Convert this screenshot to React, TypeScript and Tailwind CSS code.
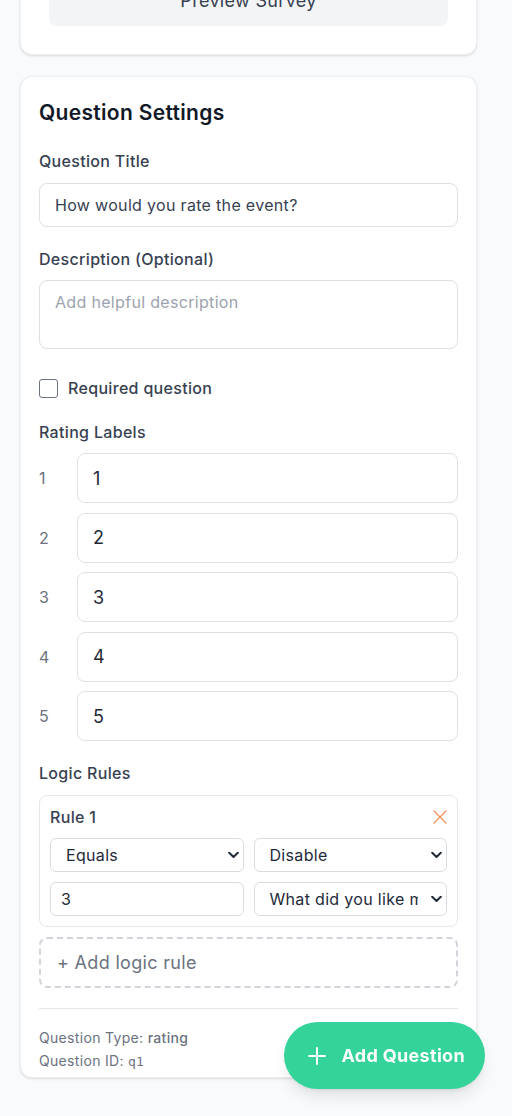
import { useState } from "react";

const labels = ["1", "2", "3", "4", "5"];

const Chevron = () => (
  <svg
    className="pointer-events-none absolute right-[5px] top-1/2 -translate-y-1/2"
    width="11"
    height="7"
    viewBox="0 0 11 7"
    fill="none"
  >
    <path d="M1.2 1.2 5.5 5.5 9.8 1.2" stroke="#1f2937" strokeWidth="2" strokeLinecap="round" strokeLinejoin="round" />
  </svg>
);

const RuleSelect = ({ value, options }: { value: string; options: string[] }) => (
  <div className="relative">
    <select
      defaultValue={value}
      className="h-[34px] w-full appearance-none rounded-md border border-[#d9dce1] bg-white pl-[15px] pr-[28px] text-base text-gray-800 outline-none"
    >
      {options.map((o) => (
        <option key={o} value={o}>
          {o}
        </option>
      ))}
    </select>
    <Chevron />
  </div>
);

export default function App() {
  const [required, setRequired] = useState(false);

  return (
    <div className="h-[1116px] overflow-hidden bg-[#f9fafb] font-['Inter',sans-serif] tracking-[0.02em]">
      <div className="-mt-[55px] flex flex-col gap-[21px] pl-5 pr-[35px]">
        {/* survey actions card, mostly scrolled out of view */}
        <div className="rounded-xl border border-[#eceef1] bg-white p-7 shadow-sm">
          <button className="h-[52px] w-full rounded-lg bg-[#f3f4f6] pt-[2px] text-lg text-[#374151]">
            Preview Survey
          </button>
        </div>

        {/* question settings */}
        <div className="flex flex-col rounded-xl border border-[#eceef1] bg-white px-[18px] pt-5 pb-[5px] shadow-sm">
          <h2 className="mb-[22px] pt-[2px] text-[21px] leading-7 font-semibold text-[#111827]">Question Settings</h2>

          <label className="mb-2.5 text-base font-medium text-[#374151]">Question Title</label>
          <input
            type="text"
            defaultValue="How would you rate the event?"
            className="h-[44px] w-full rounded-lg border border-[#dde0e4] px-[15px] text-base text-[#374151] outline-none"
          />

          <label className="mt-5 mb-[9px] text-base font-medium text-[#374151]">Description (Optional)</label>
          <textarea
            rows={2}
            placeholder="Add helpful description"
            className="block h-[69px] w-full resize-none rounded-lg border border-[#dde0e4] px-[15px] py-[9px] text-base text-[#374151] outline-none placeholder:text-[#9ca3af]"
          />

          <label className="mt-[27px] flex items-center gap-2.5 text-base font-medium text-[#374151]">
            <input
              type="checkbox"
              checked={required}
              onChange={() => setRequired(!required)}
              className="h-[19px] w-[19px] appearance-none rounded-[3px] border-[1.5px] border-[#6b7280] bg-white"
            />
            Required question
          </label>

          <label className="mt-5 mb-[9px] text-base font-medium text-[#374151]">Rating Labels</label>
          <div className="flex flex-col gap-[9.5px]">
            {labels.map((l) => (
              <div key={l} className="flex items-center gap-[14px]">
                <span className="w-6 text-base text-[#6b7280]">{l}</span>
                <input
                  type="text"
                  defaultValue={l}
                  className="h-[50px] flex-1 rounded-lg border border-[#dde0e4] px-[15px] text-lg text-[#1f2937] outline-none"
                />
              </div>
            ))}
          </div>

          <label className="mt-5 mb-[10px] text-base font-medium text-[#374151]">Logic Rules</label>
          <div className="rounded-lg border border-[#e5e7eb] px-2.5 pt-[9px] pb-2.5">
            <div className="mb-[9px] flex h-6 items-center justify-between">
              <span className="text-base font-medium text-[#374151]">Rule 1</span>
              <button className="text-[#f0935c]" aria-label="Remove rule">
                <svg width="14" height="14" viewBox="0 0 14 14" fill="none">
                  <path d="M1 1 13 13M13 1 1 13" stroke="currentColor" strokeWidth="1.4" strokeLinecap="round" />
                </svg>
              </button>
            </div>
            <div className="grid grid-cols-2 gap-2.5">
              <RuleSelect value="Equals" options={["Equals", "Not equals", "Greater than", "Less than"]} />
              <RuleSelect value="Disable" options={["Show", "Hide", "Disable", "Skip to"]} />
              <input
                type="text"
                defaultValue="3"
                className="h-[34px] w-full rounded-md border border-[#d9dce1] px-2.5 text-base text-[#1f2937] outline-none"
              />
              <RuleSelect
                value="What did you like most?"
                options={["What did you like most?", "Any other comments?"]}
              />
            </div>
          </div>

          <button className="mt-[10px] h-[51px] w-full rounded-lg border-2 border-dashed border-[#d1d5db] px-4 text-left text-lg text-[#6b7280]">
            + Add logic rule
          </button>

          <div className="mt-5 flex flex-col gap-[3px] border-t border-[#e5e7eb] pt-[19px] text-sm text-[#6b7280]">
            <p>
              Question Type: <span className="font-medium">rating</span>
            </p>
            <p>
              Question ID: <span className="font-['DejaVu_Sans_Mono',monospace] text-[13px] tracking-normal">q1</span>
            </p>
          </div>
        </div>
      </div>

      <button className="fixed right-[27px] bottom-[27px] flex h-[67px] items-center gap-[15px] rounded-full bg-[#34d399] pl-6 pr-5 text-lg font-bold text-white shadow-lg">
        <svg width="18" height="18" viewBox="0 0 18 18" fill="none">
          <path d="M9 1v16M1 9h16" stroke="currentColor" strokeWidth="2" strokeLinecap="round" />
        </svg>
        Add Question
      </button>
    </div>
  );
}
